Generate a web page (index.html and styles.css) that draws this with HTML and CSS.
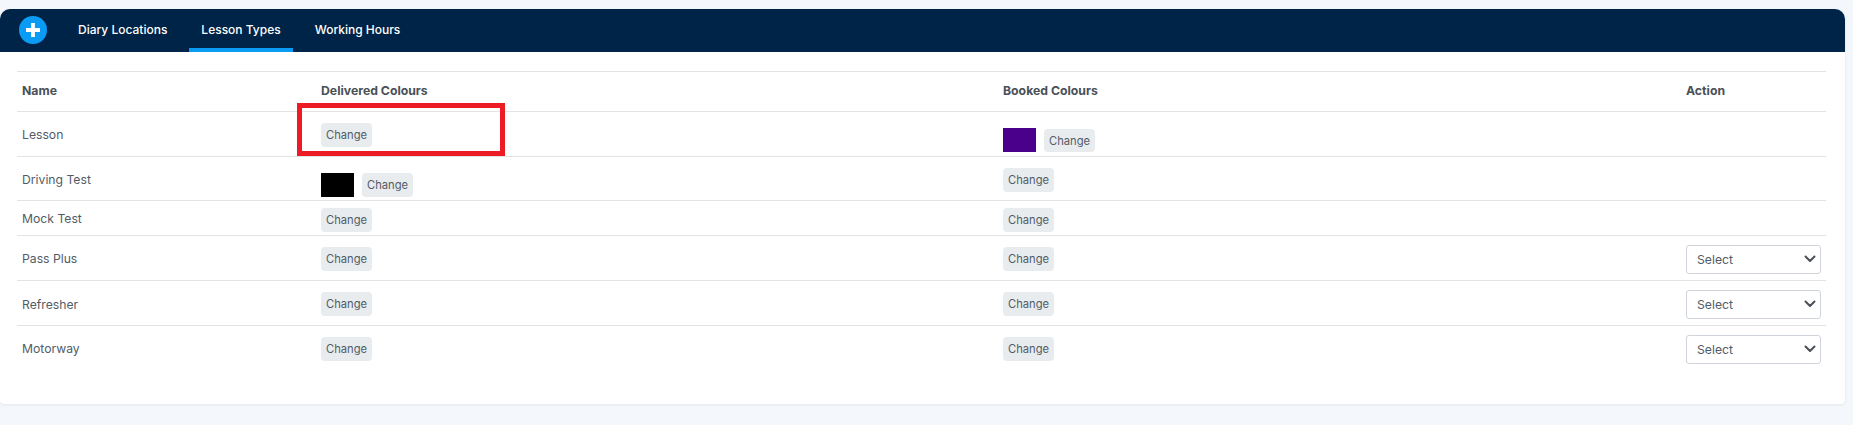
FILE: index.html
```html
<!DOCTYPE html>
<html lang="en">
<head>
<meta charset="utf-8">
<title>Lesson Types</title>
<link rel="stylesheet" href="styles.css">
</head>
<body>
<div class="card">
  <nav class="topbar">
    <span class="add">
      <svg width="28" height="28" viewBox="0 0 28 28"><circle cx="14" cy="14" r="14" fill="#0a9cf5"/><path d="M14 7v14M7 14h14" stroke="#fff" stroke-width="3.8" fill="none"/></svg>
    </span>
    <a class="tab">Diary Locations</a>
    <a class="tab active">Lesson Types</a>
    <a class="tab">Working Hours</a>
  </nav>
  <div class="content">
    <table class="types">
      <colgroup><col class="c1"><col class="c2"><col class="c3"><col class="c4"></colgroup>
      <thead>
        <tr><th>Name</th><th>Delivered Colours</th><th>Booked Colours</th><th>Action</th></tr>
      </thead>
      <tbody>
        <tr class="r1">
          <td>Lesson</td>
          <td><button class="btn">Change</button></td>
          <td class="low"><span class="sw purple"></span><button class="btn nudge">Change</button></td>
          <td></td>
        </tr>
        <tr class="r2">
          <td>Driving Test</td>
          <td class="low2"><span class="sw black"></span><button class="btn">Change</button></td>
          <td><button class="btn">Change</button></td>
          <td></td>
        </tr>
        <tr class="r3">
          <td>Mock Test</td>
          <td><button class="btn">Change</button></td>
          <td><button class="btn">Change</button></td>
          <td></td>
        </tr>
        <tr class="r4">
          <td>Pass Plus</td>
          <td><button class="btn">Change</button></td>
          <td><button class="btn">Change</button></td>
          <td><span class="selwrap"><select><option>Select</option></select><svg class="chev" width="12" height="8" viewBox="0 0 12 8"><path d="M1.500 1.500 6 6l4.500-4.500" stroke="#495057" stroke-width="2" fill="none" stroke-linecap="round" stroke-linejoin="round"/></svg></span></td>
        </tr>
        <tr class="r4">
          <td>Refresher</td>
          <td><button class="btn">Change</button></td>
          <td><button class="btn">Change</button></td>
          <td><span class="selwrap"><select><option>Select</option></select><svg class="chev" width="12" height="8" viewBox="0 0 12 8"><path d="M1.500 1.500 6 6l4.500-4.500" stroke="#495057" stroke-width="2" fill="none" stroke-linecap="round" stroke-linejoin="round"/></svg></span></td>
        </tr>
        <tr class="r4">
          <td>Motorway</td>
          <td><button class="btn">Change</button></td>
          <td><button class="btn">Change</button></td>
          <td><span class="selwrap"><select><option>Select</option></select><svg class="chev" width="12" height="8" viewBox="0 0 12 8"><path d="M1.500 1.500 6 6l4.500-4.500" stroke="#495057" stroke-width="2" fill="none" stroke-linecap="round" stroke-linejoin="round"/></svg></span></td>
        </tr>
      </tbody>
    </table>
  </div>
  <div class="marker"></div>
</div>
</body>
</html>
```
FILE: styles.css
```css
* { box-sizing: border-box; }
html, body { height: 100%; }
body {
  margin: 0;
  padding: 9px 8px 0 0;
  background: #f4f7fb;
  font-family: Inter, "Liberation Sans", sans-serif;
  font-size: 12.2px;
  color: #525c67;
  overflow: hidden;
}
.card {
  position: relative;
  height: 395px;
  background: #fff;
  border-radius: 10px 10px 4px 4px;
  box-shadow: 0 1px 3px rgba(30, 50, 80, .08);
}
.topbar {
  display: flex;
  align-items: stretch;
  height: 43px;
  padding-left: 19px;
  background: #002447;
  border-radius: 10px 10px 0 0;
}
.add {
  display: flex;
  margin-top: 7px;
  height: 28px;
  margin-right: 19px;
}
.tab {
  display: block;
  padding: 13px 12px 0;
  margin-right: 10px;
  color: #fff;
  font-weight: 500;
  font-size: 12px;
  line-height: 16px;
}
.tab.active { border-bottom: 4px solid #0a9cf5; }
.content { padding: 19px 19px 0 17px; }
.types {
  width: 100%;
  table-layout: fixed;
  border-collapse: separate;
  border-spacing: 0;
  border-top: 1px solid #e2e3e5;
}
.c1 { width: 304px; }
.c2 { width: 682px; }
.c3 { width: 683px; }
th {
  height: 39px;
  padding: 0 5px 2px;
  text-align: left;
  font-weight: 700;
  font-size: 12.25px;
  color: #495057;
}
td {
  padding: 2px 5px 0;
  border-top: 1px solid #e2e3e5;
  vertical-align: middle;
}
td:first-child { padding-top: 0; }
th:nth-child(n+2), td:nth-child(n+2) { padding-left: 0; }
.r1 td { height: 45px; }
.r2 td { height: 44px; }
.r2 td:first-child { padding-top: 1px; }
.r3 td { height: 35px; }
.r3 td:nth-child(n+2) { padding-top: 3px; }
.r4 td { height: 45px; }
tr:nth-child(5) td:first-child { padding-top: 2px; }
td.low { vertical-align: bottom; padding-bottom: 4px; }
td.low2 { vertical-align: bottom; padding-bottom: 3px; }
.btn {
  display: inline-block;
  width: 51px;
  height: 24px;
  padding: 0;
  border: 0;
  border-radius: 4px;
  background: #e9ecef;
  color: #525c67;
  font-family: inherit;
  font-size: 11.2px;
  line-height: 24px;
  vertical-align: top;
}
.btn.nudge { height: 23px; margin-top: 1px; }
.sw {
  display: inline-block;
  width: 33px;
  height: 24px;
  margin-right: 8px;
  vertical-align: top;
}
.purple { background: #4b008c; }
.black { background: #000; }
.selwrap {
  position: relative;
  display: block;
  width: 135px;
  height: 29px;
}
select {
  display: block;
  width: 100%;
  height: 100%;
  padding: 0 10px;
  appearance: none;
  border: 1px solid #ced4da;
  border-radius: 3px;
  background: #fff;
  color: #525c67;
  font-family: inherit;
  font-size: 12.2px;
}
.chev { position: absolute; right: 5px; top: 10px; pointer-events: none; }
.marker {
  position: absolute;
  left: 297px;
  top: 94px;
  width: 208px;
  height: 53px;
  border: 5px solid #ed1c24;
}
```
